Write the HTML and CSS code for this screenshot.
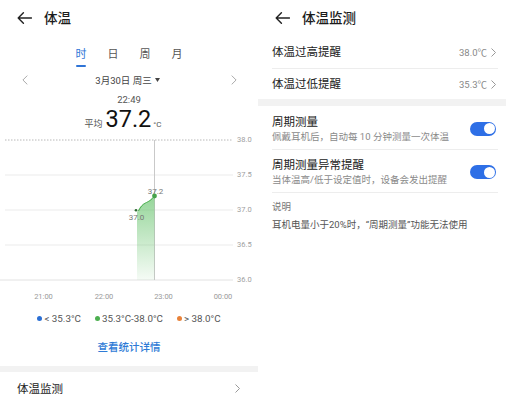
FILE: index.html
```html
<!DOCTYPE html>
<html lang="zh-CN">
<head>
<meta charset="utf-8">
<title>体温</title>
<link rel="stylesheet" href="styles.css">
</head>
<body>
<div class="screen">
  <section class="panel">
    <header class="bar">
      <svg class="back" viewBox="0 0 15 12"><path d="M14.5 6H1.2M6.4 0.8L1.2 6l5.2 5.2"/></svg>
      <h1>体温</h1>
    </header>
    <nav class="tabs">
      <div class="tab active"><span>时</span><i></i></div>
      <div class="tab"><span>日</span><i></i></div>
      <div class="tab"><span>周</span><i></i></div>
      <div class="tab"><span>月</span><i></i></div>
    </nav>
    <div class="date-row">
      <svg class="chev-lg" viewBox="0 0 6 10"><path d="M5.3 0.6L0.9 5l4.4 4.4"/></svg>
      <div class="date">3月30日 周三 <svg class="caret" viewBox="0 0 5 4"><path d="M0 0h5L2.5 4z"/></svg></div>
      <svg class="chev-lg" viewBox="0 0 6 10"><path d="M0.7 0.6L5.1 5 0.7 9.4"/></svg>
    </div>
    <div class="clock">22:49</div>
    <div class="avg">
      <span class="avg-label">平均</span><span class="avg-value">37.2</span><span class="avg-unit">°C</span>
    </div>
    <svg class="chart" width="258" height="170" viewBox="0 0 258 170">
      <defs>
        <linearGradient id="fill" x1="0" y1="0" x2="0" y2="1">
          <stop offset="0" stop-color="#5cbf62" stop-opacity="0.65"/>
          <stop offset="1" stop-color="#5cbf62" stop-opacity="0.06"/>
        </linearGradient>
      </defs>
      <line class="dotted" x1="5" y1="8" x2="233" y2="8"/>
      <line class="grid" x1="5" y1="43" x2="233" y2="43"/>
      <line class="grid" x1="5" y1="78" x2="233" y2="78"/>
      <line class="grid" x1="5" y1="113" x2="233" y2="113"/>
      <line class="grid base" x1="0" y1="148" x2="233" y2="148"/>
      <text class="ylab" x="237" y="10.4">38.0</text>
      <text class="ylab" x="237" y="45.4">37.5</text>
      <text class="ylab" x="237" y="80.4">37.0</text>
      <text class="ylab" x="237" y="115.4">36.5</text>
      <text class="ylab" x="237" y="150.4">36.0</text>
      <line class="cursor" x1="154.5" y1="8" x2="154.5" y2="148"/>
      <path fill="url(#fill)" d="M137 80L140 75L143 72L147 70L150 68L154.5 64V148H137Z"/>
      <path class="curve" d="M138.5 79C140.5 75 142.5 72.5 145.5 71S151 68.5 154.5 64"/>
      <circle cx="136" cy="78.3" r="1.3" fill="#2e6b33"/>
      <circle cx="154.5" cy="64" r="2.4" fill="#47a34c"/>
      <text class="plab" x="136.5" y="87.8">37.0</text>
      <text class="plab" x="155.5" y="61.5">37.2</text>
      <text class="xlab" x="43.5" y="166.6">21:00</text>
      <text class="xlab" x="104" y="166.6">22:00</text>
      <text class="xlab" x="163.5" y="166.6">23:00</text>
      <text class="xlab" x="223" y="166.6">00:00</text>
    </svg>
    <div class="legend">
      <div class="legend-item"><span class="dot blue"></span>&lt; 35.3°C</div>
      <div class="legend-item"><span class="dot green"></span>35.3°C-38.0°C</div>
      <div class="legend-item"><span class="dot orange"></span>&gt; 38.0°C</div>
    </div>
    <div class="link">查看统计详情</div>
    <div class="band"></div>
    <div class="nav-row">
      <span>体温监测</span>
      <svg class="chev" viewBox="0 0 5 9"><path d="M0.5 0.5l4 4-4 4"/></svg>
    </div>
  </section>

  <section class="panel">
    <header class="bar">
      <svg class="back" viewBox="0 0 15 12"><path d="M14.5 6H1.2M6.4 0.8L1.2 6l5.2 5.2"/></svg>
      <h1>体温监测</h1>
    </header>
    <div class="item first">
      <span class="item-title">体温过高提醒</span>
      <span class="value">38.0℃<svg class="chev" viewBox="0 0 5 9"><path d="M0.5 0.5l4 4-4 4"/></svg></span>
    </div>
    <div class="item second">
      <span class="item-title">体温过低提醒</span>
      <span class="value">35.3℃<svg class="chev" viewBox="0 0 5 9"><path d="M0.5 0.5l4 4-4 4"/></svg></span>
    </div>
    <div class="band tall"></div>
    <div class="item switch-item">
      <div class="texts">
        <div class="item-title">周期测量</div>
        <div class="sub">佩戴耳机后，自动每 10 分钟测量一次体温</div>
      </div>
      <div class="switch"><span class="knob"></span></div>
    </div>
    <div class="item switch-item last">
      <div class="texts">
        <div class="item-title">周期测量异常提醒</div>
        <div class="sub">当体温高/低于设定值时，设备会发出提醒</div>
      </div>
      <div class="switch"><span class="knob"></span></div>
    </div>
    <div class="note">
      <div class="note-title">说明</div>
      <div class="note-text">耳机电量小于20%时，“周期测量”功能无法使用</div>
    </div>
  </section>
</div>
</body>
</html>
```

FILE: styles.css
```css
html, body {
  margin: 0;
  padding: 0;
  background: #fff;
}

body {
  font-family: Roboto, "Noto Sans CJK SC", sans-serif;
  color: #222;
}

.screen {
  display: grid;
  grid-template-columns: 258px 248px;
  height: 400px;
  overflow: hidden;
}

.panel {
  display: flex;
  flex-direction: column;
  min-width: 0;
}

.bar {
  height: 36px;
  flex: none;
  display: flex;
  align-items: center;
  gap: 12px;
  padding-left: 17px;
}

.back {
  width: 15px;
  height: 12px;
  fill: none;
  stroke: #222;
  stroke-width: 1.4;
  stroke-linecap: round;
  stroke-linejoin: round;
}

.bar h1 {
  margin: 0;
  font-size: 13.5px;
  line-height: 20px;
  font-weight: 500;
  color: #1b1b1b;
}

/* tabs */
.tabs {
  display: flex;
  justify-content: center;
  padding-top: 10px;
  flex: none;
}

.tab {
  width: 32px;
  display: flex;
  flex-direction: column;
  align-items: center;
  font-size: 11px;
  line-height: 18px;
  color: #555;
}

.tab i {
  display: block;
  width: 10px;
  height: 2px;
  margin-top: 1px;
  border-radius: 1px;
}

.tab.active {
  color: #2f74d6;
}

.tab.active i {
  background: #2f74d6;
}

/* date row */
.date-row {
  height: 26px;
  flex: none;
  display: flex;
  align-items: center;
  justify-content: space-between;
  padding: 0 21px 0 22px;
}

.chev-lg {
  width: 6px;
  height: 10px;
  fill: none;
  stroke: #aaa;
  stroke-width: 1;
}

.date {
  display: flex;
  align-items: center;
  gap: 3px;
  font-size: 9.5px;
  color: #444;
  margin-right: 4px;
}

.caret {
  width: 5px;
  height: 4px;
  fill: #444;
}

.clock {
  text-align: center;
  font-size: 9.5px;
  line-height: 13px;
  color: #555;
  flex: none;
}

.avg {
  height: 26px;
  line-height: 26px;
  flex: none;
  display: flex;
  justify-content: center;
  align-items: baseline;
  padding-right: 12px;
}

.avg-label {
  font-size: 9px;
  color: #555;
  margin-right: 3px;
}

.avg-value {
  font-size: 23.5px;
  color: #111;
}

.avg-unit {
  font-size: 8px;
  color: #555;
  margin-left: 2px;
}

/* chart */
.chart {
  display: block;
  flex: none;
}

.chart .dotted {
  stroke: #b8b8b8;
  stroke-width: 1;
  stroke-dasharray: 1.5 1.5;
}

.chart .grid {
  stroke: #ebebeb;
  stroke-width: 1;
}

.chart .grid.base {
  stroke: #e2e2e2;
}

.chart .cursor {
  stroke: #c9c9c9;
  stroke-width: 1;
}

.chart .curve {
  fill: none;
  stroke: #4caf50;
  stroke-width: 1;
}

.chart text {
  font-family: Roboto, sans-serif;
}

.chart .ylab {
  font-size: 7.5px;
  fill: #a0a0a0;
}

.chart .plab {
  font-size: 8px;
  fill: #777;
  text-anchor: middle;
}

.chart .xlab {
  font-size: 7.5px;
  fill: #9a9a9a;
  text-anchor: middle;
}

/* legend */
.legend {
  height: 32px;
  flex: none;
  display: flex;
  justify-content: center;
  align-items: center;
  gap: 14px;
  font-size: 9.8px;
  color: #555;
}

.legend-item {
  display: flex;
  align-items: center;
  gap: 2px;
}

.dot {
  width: 5px;
  height: 5px;
  border-radius: 50%;
}

.dot.blue { background: #2b6fd4; }
.dot.green { background: #4caf50; }
.dot.orange { background: #e8823a; }

.link {
  height: 32px;
  line-height: 28px;
  flex: none;
  text-align: center;
  font-size: 10.5px;
  font-weight: 500;
  color: #2f7bd6;
}

.band {
  height: 6px;
  flex: none;
  background: #f2f2f2;
}

.band.tall {
  height: 7px;
}

.nav-row {
  height: 32px;
  flex: none;
  display: flex;
  justify-content: space-between;
  align-items: center;
  padding: 0 18px 0 17px;
  font-size: 11.5px;
  color: #222;
}

.chev {
  width: 5px;
  height: 9px;
  fill: none;
  stroke: #999;
  stroke-width: 1;
}

/* right panel list */
.item {
  margin: 0 8px 0 14px;
  padding-right: 2px;
  display: flex;
  align-items: center;
  justify-content: space-between;
  flex: none;
}

.item.first {
  height: 32px;
  border-bottom: 1px solid #ededed;
}

.item.second {
  height: 30px;
}

.item-title {
  font-size: 11.5px;
  line-height: 14px;
  color: #222;
}

.value {
  display: flex;
  align-items: center;
  gap: 4px;
  font-size: 9.5px;
  color: #888;
}

.switch-item {
  padding-top: 8.5px;
  padding-bottom: 6.5px;
  border-bottom: 1px solid #ededed;
}

.switch-item.last {
  padding-top: 8px;
  padding-bottom: 6px;
}

.sub {
  margin-top: 1px;
  font-size: 9.5px;
  line-height: 13px;
  color: #8a8a8a;
}

.switch {
  width: 26px;
  height: 14px;
  box-sizing: border-box;
  padding: 0 1.5px;
  border-radius: 7px;
  background: #2e6fe6;
  display: flex;
  align-items: center;
  justify-content: flex-end;
  flex: none;
}

.knob {
  width: 11px;
  height: 11px;
  border-radius: 50%;
  background: #fff;
}

.note {
  margin-left: 14px;
  padding-top: 7px;
}

.note-title {
  font-size: 9.5px;
  line-height: 14px;
  color: #777;
}

.note-text {
  margin-top: 4px;
  font-size: 9.5px;
  line-height: 14px;
  color: #555;
}
```
